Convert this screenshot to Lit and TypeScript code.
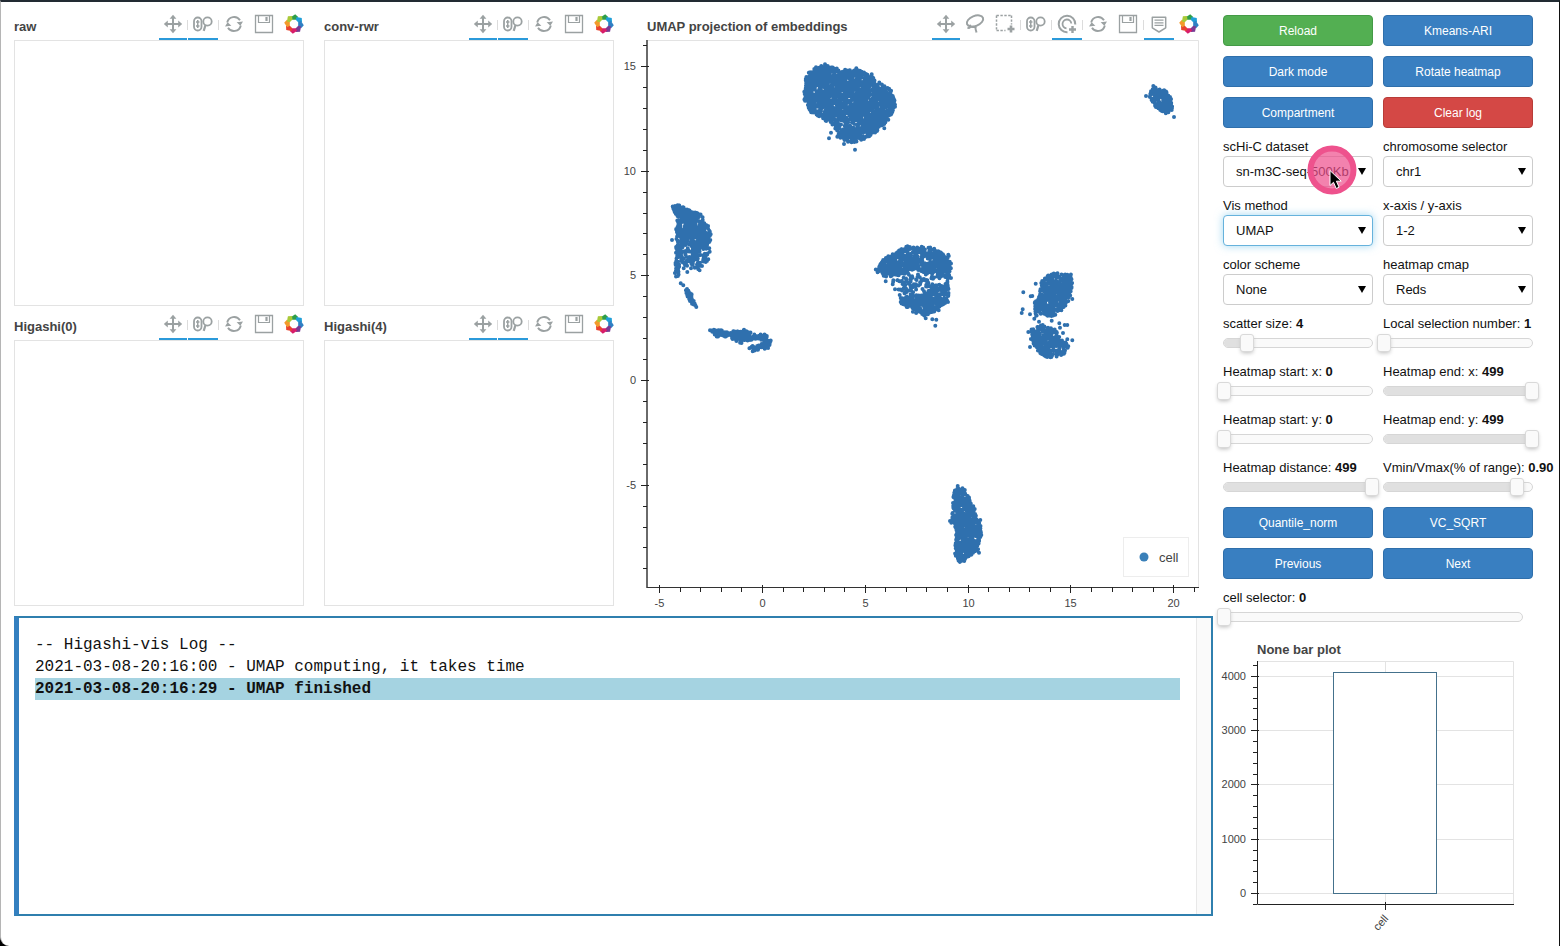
import { LitElement, html, svg, css, nothing } from "lit";
import { customElement, property } from "lit/decorators.js";
import { classMap } from "lit/directives/class-map.js";
import { styleMap } from "lit/directives/style-map.js";

type Point = [number, number];

/* ---------- scatter data ---------- */

interface Cluster {
  origin: Point;
  density: number;
  outline: Point[];
  outliers: Point[];
}

// Outlines are kept in thirds of a plot unit, relative to each cluster's origin.
const UNIT = 3;

const CLUSTERS: Cluster[] = [
  {
    origin: [640, 40],
    density: 0.36,
    outline: [[498, 104], [528, 82], [555, 75], [598, 88], [650, 88], [688, 104], [720, 127], [750, 145], [766, 165], [766, 200], [743, 243], [712, 273], [670, 302], [630, 308], [602, 295], [580, 260], [545, 233], [510, 215], [490, 175]],
    outliers: [[695, 103], [733, 265], [573, 278], [567, 295], [645, 329], [612, 312], [592, 290], [555, 73], [649, 85]],
  },
  {
    origin: [640, 190],
    density: 0.38,
    outline: [[98, 46], [115, 45], [150, 60], [183, 74], [200, 95], [212, 130], [208, 165], [170, 180], [140, 160], [118, 190], [118, 250], [112, 263], [103, 260], [108, 200], [107, 120], [112, 80], [98, 62]],
    outliers: [[96, 150], [122, 280], [130, 286], [151, 215], [143, 175], [125, 210], [142, 246], [131, 235], [139, 200], [212, 133], [211, 150]],
  },
  {
    origin: [640, 190],
    density: 0.17,
    outline: [[120, 185], [165, 175], [210, 172], [208, 205], [180, 242], [165, 238], [125, 232]],
    outliers: [[175, 238], [186, 228], [197, 216], [170, 232], [180, 218], [205, 208], [192, 205]],
  },
  {
    origin: [640, 190],
    density: 0.7,
    outline: [[135, 300], [155, 302], [162, 335], [168, 350], [155, 342], [145, 325]],
    outliers: [[141, 297], [169, 351]],
  },
  {
    origin: [640, 190],
    density: 0.42,
    outline: [[212, 416], [235, 418], [260, 424], [285, 424], [312, 420], [345, 430], [378, 434], [396, 455], [383, 476], [340, 483], [320, 470], [345, 465], [372, 460], [360, 445], [320, 452], [300, 462], [282, 450], [260, 440], [225, 440]],
    outliers: [[280, 424], [312, 419], [338, 484], [210, 421], [265, 432], [272, 436], [258, 430]],
  },
  {
    origin: [860, 230],
    density: 0.34,
    outline: [[44, 122], [70, 88], [110, 62], [150, 45], [215, 53], [268, 77], [275, 110], [268, 145], [220, 150], [195, 130], [170, 118], [150, 130], [115, 138], [75, 140]],
    outliers: [[273, 144], [265, 74], [77, 154], [98, 163], [105, 178]],
  },
  {
    origin: [860, 230],
    density: 0.38,
    outline: [[120, 205], [140, 198], [195, 195], [215, 170], [266, 152], [266, 210], [235, 238], [195, 258], [150, 243], [122, 218]],
    outliers: [[197, 265], [217, 268], [229, 269], [226, 287], [236, 241], [264, 216]],
  },
  {
    origin: [860, 230],
    density: 0.09,
    outline: [[95, 150], [150, 130], [200, 130], [220, 165], [190, 200], [120, 195], [105, 175]],
    outliers: [[119, 195], [136, 166], [190, 150], [205, 158]],
  },
  {
    origin: [860, 230],
    density: 0.34,
    outline: [[545, 147], [580, 128], [635, 134], [638, 175], [628, 208], [608, 240], [580, 258], [527, 258], [522, 220], [537, 200]],
    outliers: [[490, 187], [512, 199], [517, 198], [527, 161], [488, 238], [485, 249], [510, 253], [523, 266], [537, 275], [637, 207], [625, 213]],
  },
  {
    origin: [860, 230],
    density: 0.36,
    outline: [[515, 294], [550, 284], [588, 300], [608, 325], [628, 345], [610, 376], [570, 386], [537, 368], [510, 328]],
    outliers: [[505, 306], [510, 351], [637, 331], [622, 328], [598, 280], [600, 293], [614, 285], [622, 285], [575, 272], [548, 285], [609, 309]],
  },
  {
    origin: [920, 470],
    density: 0.42,
    outline: [[105, 52], [132, 55], [150, 87], [165, 117], [170, 147], [183, 157], [183, 193], [175, 243], [140, 263], [135, 277], [110, 276], [104, 245], [108, 200], [105, 165], [96, 150], [98, 95]],
    outliers: [[113, 48], [90, 153], [94, 158], [181, 150], [184, 195], [177, 248]],
  },
  {
    origin: [1140, 70],
    density: 0.4,
    outline: [[20, 76], [40, 50], [76, 60], [94, 84], [98, 120], [76, 132], [42, 108], [30, 86]],
    outliers: [[102, 141], [40, 48], [18, 78]],
  },
];

function makeRandom(seed: number) {
  let state = seed;
  return () => {
    state = (state + 0x6d2b79f5) | 0;
    let t = Math.imul(state ^ (state >>> 15), 1 | state);
    t = (t + Math.imul(t ^ (t >>> 7), 61 | t)) ^ t;
    return ((t ^ (t >>> 14)) >>> 0) / 4294967296;
  };
}

function inside([x, y]: Point, polygon: Point[]): boolean {
  let hit = false;
  for (let i = 0, j = polygon.length - 1; i < polygon.length; j = i++) {
    const [xi, yi] = polygon[i];
    const [xj, yj] = polygon[j];
    if (yi > y !== yj > y && x < ((xj - xi) * (y - yi)) / (yj - yi) + xi) hit = !hit;
  }
  return hit;
}

function scatterPath(): string {
  const random = makeRandom(20210308);
  const dots: string[] = [];
  for (const { origin, density, outline, outliers } of CLUSTERS) {
    const place = ([x, y]: Point) =>
      dots.push(`M${(origin[0] + x / UNIT).toFixed(1)} ${(origin[1] + y / UNIT).toFixed(1)}h0`);
    const xs = outline.map((p) => p[0]);
    const ys = outline.map((p) => p[1]);
    const [x0, x1, y0, y1] = [Math.min(...xs), Math.max(...xs), Math.min(...ys), Math.max(...ys)];
    const tries = (((x1 - x0) * (y1 - y0)) / (UNIT * UNIT)) * density;
    for (let i = 0; i < tries; i++) {
      const p: Point = [x0 + random() * (x1 - x0), y0 + random() * (y1 - y0)];
      if (inside(p, outline)) place(p);
    }
    outliers.forEach(place);
  }
  return dots.join("");
}

const range = (from: number, to: number, step = 1) =>
  Array.from({ length: Math.floor((to - from) / step) + 1 }, (_, i) => from + i * step);

/* ---------- toolbar ---------- */

const ICONS: Record<string, unknown> = {
  pan: svg`<path d="M10 3v14M3 10h14" stroke-width="2"/><path d="M10 0.8l3.4 4H6.6zM10 19.2l3.4-4H6.6zM0.8 10l4-3.4v6.8zM19.2 10l-4-3.4v6.8z" fill="currentColor" stroke="none"/>`,
  lasso: svg`<ellipse cx="10" cy="7" rx="8.6" ry="5" transform="rotate(-22 10 7)" stroke-width="2"/><path d="M2.5 13.5c2 1.500 4-1 2-2.500M5 12.500c3 0.500 5 0.500 6.500 0.500M11 12.500c-1.500 2 0 3 0.500 6" stroke-width="2"/>`,
  box: svg`<path d="M1.5 1.500h15M1.500 1.500v14.500M16.500 1.500v9M1.500 16.500h9" stroke-width="1.5" stroke-dasharray="2.4 1.5"/><path d="M16 11.500v7M12.500 15h7" stroke-width="2.6"/>`,
  wheel: svg`<rect x="1" y="3.5" width="7.5" height="13" rx="3.7" stroke-width="1.8"/><path d="M4.750 6v8M3 8h3.500M3 12h3.500" stroke-width="1.5"/><circle cx="14.5" cy="7.5" r="4.2" stroke-width="1.8"/><path d="M12.500 11l-1.800 5.800" stroke-width="2.2"/>`,
  tap: svg`<path d="M10.500 18.300A8.300 8.300 0 1 1 18.300 10.500" stroke-width="2"/><path d="M9.500 14.300A4.400 4.400 0 1 1 14.300 9.500" stroke-width="1.8"/><path d="M15.500 12v7M12 15.500h7" stroke-width="2.4"/>`,
  reset: svg`<path d="M3.200 8.500A7 7 0 0 1 16 6.300M16.800 11.500A7 7 0 0 1 4 13.700" stroke-width="1.9"/><path d="M19 7.500l-2.600 4.200-3.800-3.400zM1 12.500l2.600-4.200 3.800 3.400z" fill="currentColor" stroke="none"/>`,
  save: svg`<path d="M1.500 1.500h17v17h-17z" stroke-width="1.300"/><path d="M4.500 1.500v7h11v-7" stroke-width="1.200"/><path d="M12.500 3v4" stroke-width="2.200"/>`,
  hover: svg`<path d="M3.300 3.200h13.400v10.600L10 18 3.300 13.800z" stroke-width="1.500" stroke-linejoin="round"/><path d="M5.500 6.200h9M5.500 8.800h9M5.500 11.400h9" stroke-width="1.300"/>`,
};

const LOGO_COLOURS = ["#2e9e49", "#1f9fd8", "#2f80c4", "#7a3b94", "#d81e6b", "#e8432f", "#f39a2b", "#a9c938"];

const logo = svg`${LOGO_COLOURS.map(
  (colour, i) =>
    svg`<path transform="rotate(${i * 45} 10 10)" fill=${colour} stroke="none" d="M8.200 5.800L6.800 3.200 11.200 0.200 14.200 2.900 12.100 5.800z"/>`
)}`;

const LABELS: Record<string, string> = {
  pan: "Pan",
  lasso: "Lasso select",
  box: "Box select",
  wheel: "Wheel zoom",
  tap: "Tap",
  reset: "Reset",
  save: "Save",
  hover: "Hover",
};

@customElement("plot-toolbar")
class PlotToolbar extends LitElement {
  /* Space-separated tools; "|" draws a divider and a trailing "*" marks an active tool. */
  @property() tools = "";

  static styles = css`
    :host {
      display: flex;
      align-items: stretch;
      height: 30px;
    }
    .tool,
    .logo {
      box-sizing: border-box;
      display: flex;
      align-items: center;
      justify-content: center;
      width: 30px;
      padding: 0;
      border: 0;
      border-bottom: 2px solid transparent;
      background: none;
      color: #9ba1a2;
    }
    .tool:first-child {
      width: 28px;
    }
    .active {
      border-bottom-color: #2b9ada;
    }
    .divider {
      align-self: center;
      width: 1px;
      height: 10px;
      background: #dcdcdc;
    }
    svg {
      width: 20px;
      height: 20px;
      fill: none;
      stroke: currentColor;
    }
  `;

  render() {
    return html`${this.tools.split(" ").map((entry) => {
        if (entry === "|") return html`<span class="divider"></span>`;
        const name = entry.replace("*", "");
        const active = entry.endsWith("*");
        return html`<button class=${classMap({ tool: true, active })} aria-label=${LABELS[name]}>
          <svg viewBox="0 0 20 20" aria-hidden="true">${ICONS[name]}</svg>
        </button>`;
      })}<a class="logo" href="#" aria-label="Bokeh"><svg viewBox="0 0 20 20" aria-hidden="true">${logo}</svg></a>`;
  }
}

/* ---------- heatmap panel ---------- */

@customElement("heatmap-panel")
class HeatmapPanel extends LitElement {
  @property() heading = "";

  static styles = css`
    :host {
      display: block;
      min-width: 0;
    }
    .head {
      display: flex;
      justify-content: space-between;
      height: 30px;
      margin-right: -5px;
    }
    h2 {
      margin: 0;
      padding-top: 4px;
      font-size: 13px;
      line-height: 26px;
      color: #444;
    }
    .plot {
      box-sizing: border-box;
      aspect-ratio: 290 / 266;
      border: 1px solid #e3e3e3;
    }
  `;

  render() {
    return html`
      <div class="head">
        <h2>${this.heading}</h2>
        <plot-toolbar tools="pan* | wheel* | reset save"></plot-toolbar>
      </div>
      <div class="plot"></div>
    `;
  }
}

/* ---------- UMAP plot ---------- */

const umapX = (v: number) => Math.round(762 + v * 20.56) + 0.5;
const umapY = (v: number) => Math.round(380 - v * 20.93) + 0.5;

@customElement("umap-plot")
class UmapPlot extends LitElement {
  static styles = css`
    :host {
      display: block;
      min-width: 0;
    }
    .head {
      display: flex;
      justify-content: space-between;
      height: 30px;
      padding-left: 27px;
    }
    h2 {
      margin: 0;
      padding-top: 4px;
      font-size: 13px;
      line-height: 26px;
      white-space: nowrap;
      color: #444;
    }
    svg {
      display: block;
      width: 100%;
    }
    .frame {
      fill: none;
      stroke: #e3e3e3;
    }
    .y-axis {
      stroke: #6a6a6a;
      stroke-width: 2;
    }
    .x-axis {
      stroke: #333;
    }
    .tick {
      stroke: #222;
    }
    .dots {
      fill: none;
      stroke: #2f70ae;
      stroke-width: 4;
      stroke-linecap: round;
    }
    .label {
      font-size: 11px;
      fill: #444;
    }
    .end {
      text-anchor: end;
    }
    .middle {
      text-anchor: middle;
    }
    .legend {
      fill: #fff;
      stroke: #ededed;
    }
    .marker {
      fill: #3a80b9;
    }
    .legend-text {
      font-size: 13px;
      fill: #444;
    }
  `;

  render() {
    return html`
      <div class="head">
        <h2>UMAP projection of embeddings</h2>
        <plot-toolbar tools="pan* lasso box | wheel | tap* | reset save | hover*"></plot-toolbar>
      </div>
      <svg viewBox="620 40 584 570" role="img" aria-label="UMAP scatter plot">
        <path class="frame" d="M647 40.500H1198.500V587" />
        <path class="dots" d=${scatterPath()} />
        <path class="y-axis" d="M647 40V588" />
        <path class="x-axis" d="M647 587.500H1199" />
        ${range(-9, 16).map((v) => {
          const major = v % 5 === 0;
          const y = umapY(v);
          return svg`<path class="tick" d="M${major ? 641 : 643} ${y}H${major ? 649 : 647}"/>
            ${major ? svg`<text class="label end" x="636" y=${y + 3.5}>${v}</text>` : nothing}`;
        })}
        ${range(-5, 21).map((v) => {
          const major = v % 5 === 0;
          const x = umapX(v);
          return svg`<path class="tick" d="M${x} ${major ? 585 : 587}V${major ? 593 : 592}"/>
            ${major ? svg`<text class="label middle" x=${x} y="607">${v}</text>` : nothing}`;
        })}
        <rect class="legend" x="1123.5" y="537.5" width="65" height="39" />
        <circle class="marker" cx="1144" cy="557" r="4.5" />
        <text class="legend-text" x="1159" y="562">cell</text>
      </svg>
    `;
  }
}

/* ---------- bar plot ---------- */

const barY = (v: number) => Math.round(893 - v * 0.0543) + 0.5;

@customElement("bar-plot")
class BarPlot extends LitElement {
  static styles = css`
    :host {
      display: block;
    }
    svg {
      display: block;
      width: 100%;
    }
    .title {
      font-size: 13px;
      font-weight: bold;
      fill: #444;
    }
    .grid {
      fill: none;
      stroke: #e3e3e3;
    }
    .axis {
      fill: none;
      stroke: #222;
    }
    .bar {
      fill: #fff;
      stroke: #44718c;
    }
    .label {
      font-size: 11px;
      fill: #444;
    }
    .end {
      text-anchor: end;
    }
  `;

  render() {
    return html`<svg viewBox="1218 637 300 300" role="img" aria-label="None bar plot">
      <text class="title" x="1257" y="654">None bar plot</text>
      <path class="grid" d="M1257 661.500H1513.500V904M1385.500 661V904" />
      ${range(0, 4000, 1000).map((v) => svg`<path class="grid" d="M1257 ${barY(v)}H1514"/>`)}
      <rect class="bar" x="1333.5" y="672.5" width="103" height="221" />
      <path class="axis" d="M1257.500 661V904.500H1514M1385.500 902V910" />
      ${range(-200, 4200, 200).map((v) => {
        const major = v % 1000 === 0;
        const y = barY(v);
        return svg`<path class="axis" d="M${major ? 1251 : 1253} ${y}H${major ? 1259 : 1257}"/>
          ${major ? svg`<text class="label end" x="1246" y=${y + 3.5}>${v}</text>` : nothing}`;
      })}
      <text class="label end" transform="translate(1389 919) rotate(-48)">cell</text>
    </svg>`;
  }
}

/* ---------- form fields ---------- */

@customElement("select-field")
class SelectField extends LitElement {
  @property() label = "";
  @property() value = "";
  @property({ type: Boolean }) highlighted = false;

  static styles = css`
    :host {
      display: block;
    }
    label {
      display: block;
      line-height: 18px;
      white-space: nowrap;
    }
    .control {
      display: grid;
      align-items: center;
    }
    select {
      grid-area: 1 / 1;
      box-sizing: border-box;
      width: 100%;
      height: 31px;
      padding: 0 12px;
      border: 1px solid #ccc;
      border-radius: 4px;
      background: #fff;
      color: #111;
      font: inherit;
      appearance: none;
    }
    .highlighted {
      border-color: #66b2dc;
      box-shadow: 0 0 8px rgba(102, 190, 233, 0.6);
    }
    svg {
      grid-area: 1 / 1;
      justify-self: end;
      width: 8px;
      height: 7px;
      margin-right: 7px;
      pointer-events: none;
    }
  `;

  render() {
    return html`
      <label for="field">${this.label}</label>
      <div class="control">
        <select id="field" class=${classMap({ highlighted: this.highlighted })}>
          <option>${this.value}</option>
        </select>
        <svg viewBox="0 0 8 7" aria-hidden="true"><path d="M0 0h8L4 7z" /></svg>
      </div>
    `;
  }
}

@customElement("slider-field")
class SliderField extends LitElement {
  @property() label = "";
  @property() value = "0";
  @property({ type: Number }) min = 0;
  @property({ type: Number }) max = 499;
  @property({ type: Number }) step = 1;

  static styles = css`
    :host {
      display: block;
    }
    label {
      display: block;
      line-height: 18px;
      white-space: nowrap;
    }
    .control {
      display: grid;
      align-items: center;
      height: 20px;
    }
    .track {
      grid-area: 1 / 1;
      box-sizing: border-box;
      height: 10px;
      border: 1px solid #d6d6d6;
      border-radius: 5px;
      background: #fafafa;
      overflow: hidden;
    }
    .fill {
      height: 100%;
      background: #e0e0e0;
    }
    input {
      grid-area: 1 / 1;
      width: calc(100% + 12px);
      height: 18px;
      margin: 0 -6px;
      background: none;
      appearance: none;
    }
    input::-webkit-slider-thumb {
      box-sizing: border-box;
      width: 14px;
      height: 18px;
      border: 1px solid #d9d9d9;
      border-radius: 3px;
      background: #fafafa;
      box-shadow: 0 2px 4px -1px #bbb;
      appearance: none;
    }
  `;

  render() {
    const share = ((Number(this.value) - this.min) / (this.max - this.min)) * 100;
    return html`
      <label for="field">${this.label}: <b>${this.value}</b></label>
      <div class="control">
        <div class="track"><div class="fill" style=${styleMap({ width: `${share}%` })}></div></div>
        <input id="field" type="range" min=${this.min} max=${this.max} step=${this.step} .value=${this.value} />
      </div>
    `;
  }
}

/* ---------- application ---------- */

@customElement("app-root")
class AppRoot extends LitElement {
  static styles = css`
    :host {
      display: block;
      background: #000;
      color: #111;
      font-family: "Liberation Sans", Arial, Helvetica, sans-serif;
      font-size: 13px;
    }
    .window {
      box-sizing: border-box;
      display: flex;
      gap: 10px;
      min-height: 100vh;
      padding: 8px 26px 0 13px;
      border-top: 2px solid #222b33;
      border-left: 1px solid #b5b5b5;
      border-right: 1px solid #111;
      border-bottom-left-radius: 9px;
      background: #fff;
    }
    .workspace {
      flex: 1;
      min-width: 0;
    }
    .plots {
      display: flex;
      gap: 6px;
      padding-right: 9px;
    }
    .heatmaps {
      flex: 600;
      display: grid;
      grid-template-columns: 1fr 1fr;
      align-content: start;
      gap: 4px 20px;
      min-width: 0;
    }
    .umap {
      flex: 584;
    }
    .log {
      box-sizing: border-box;
      display: flex;
      height: 300px;
      margin-top: 6px;
      border: 2px solid #2f7fae;
      border-left: 5px solid #3480c0;
      color: #111;
      font-family: "Liberation Mono", "Courier New", monospace;
      font-size: 16px;
      line-height: 22px;
    }
    .lines {
      flex: 1;
      margin: 0;
      padding: 16px;
      list-style: none;
    }
    .latest {
      background: #a5d3e1;
      font-weight: bold;
    }
    .scroll {
      box-sizing: border-box;
      width: 15px;
      border-left: 1px solid #e8e8e8;
      background: #fafafa;
    }
    .controls {
      display: grid;
      grid-template-columns: 150px 150px;
      align-content: start;
      gap: 10px;
      padding-top: 5px;
    }
    .button {
      height: 31px;
      padding: 0;
      border: 1px solid #2f6fab;
      border-radius: 4px;
      background: #397fc1;
      color: #fff;
      font-family: inherit;
      font-size: 12px;
    }
    .success {
      border-color: #449a46;
      background: #53af52;
    }
    .danger {
      border-color: #b83c38;
      background: #d44845;
    }
    .dataset {
      position: relative;
    }
    .pointer {
      position: absolute;
      top: 7px;
      left: 84px;
      width: 50px;
      height: 50px;
      pointer-events: none;
    }
    .wide {
      grid-column: 1 / -1;
      margin-right: 10px;
    }
    .bars {
      grid-column: 1 / -1;
      margin: 0 15px 0 -5px;
    }
  `;

  private button(label: string, kind = "") {
    return html`<button class="button ${kind}">${label}</button>`;
  }

  render() {
    return html`
      <main class="window">
        <section class="workspace">
          <div class="plots">
            <div class="heatmaps">
              ${["raw", "conv-rwr", "Higashi(0)", "Higashi(4)"].map(
                (name) => html`<heatmap-panel heading=${name}></heatmap-panel>`
              )}
            </div>
            <umap-plot class="umap"></umap-plot>
          </div>
          <div class="log">
            <ul class="lines">
              <li>-- Higashi-vis Log --</li>
              <li>2021-03-08-20:16:00 - UMAP computing, it takes time</li>
              <li class="latest">2021-03-08-20:16:29 - UMAP finished</li>
            </ul>
            <div class="scroll"></div>
          </div>
        </section>
        <aside class="controls">
          ${this.button("Reload", "success")} ${this.button("Kmeans-ARI")} ${this.button("Dark mode")}
          ${this.button("Rotate heatmap")} ${this.button("Compartment")} ${this.button("Clear log", "danger")}
          <div class="dataset">
            <select-field label="scHi-C dataset" value="sn-m3C-seq-500Kb"></select-field>
            <svg class="pointer" viewBox="0 0 50 50" aria-hidden="true">
              <circle cx="25" cy="25" r="20.5" fill="#ee4d8b" fill-opacity="0.7" />
              <circle cx="25" cy="25" r="21.5" fill="none" stroke="#ee528d" stroke-width="6" />
              <path d="M23 25.500v15l3.500-3.200 2.700 6.200 2.900-1.300-2.700-6h4.800z" fill="#000" stroke="#fff" stroke-width="1" />
            </svg>
          </div>
          <select-field label="chromosome selector" value="chr1"></select-field>
          <select-field label="Vis method" value="UMAP" highlighted></select-field>
          <select-field label="x-axis / y-axis" value="1-2"></select-field>
          <select-field label="color scheme" value="None"></select-field>
          <select-field label="heatmap cmap" value="Reds"></select-field>
          <slider-field label="scatter size" value="4" min="1" max="20"></slider-field>
          <slider-field label="Local selection number" value="1" min="1" max="20"></slider-field>
          <slider-field label="Heatmap start: x" value="0"></slider-field>
          <slider-field label="Heatmap end: x" value="499"></slider-field>
          <slider-field label="Heatmap start: y" value="0"></slider-field>
          <slider-field label="Heatmap end: y" value="499"></slider-field>
          <slider-field label="Heatmap distance" value="499"></slider-field>
          <slider-field label="Vmin/Vmax(% of range)" value="0.90" max="1" step="0.01"></slider-field>
          ${this.button("Quantile_norm")} ${this.button("VC_SQRT")} ${this.button("Previous")} ${this.button("Next")}
          <slider-field class="wide" label="cell selector" value="0" max="4000"></slider-field>
          <bar-plot class="bars"></bar-plot>
        </aside>
      </main>
    `;
  }
}
